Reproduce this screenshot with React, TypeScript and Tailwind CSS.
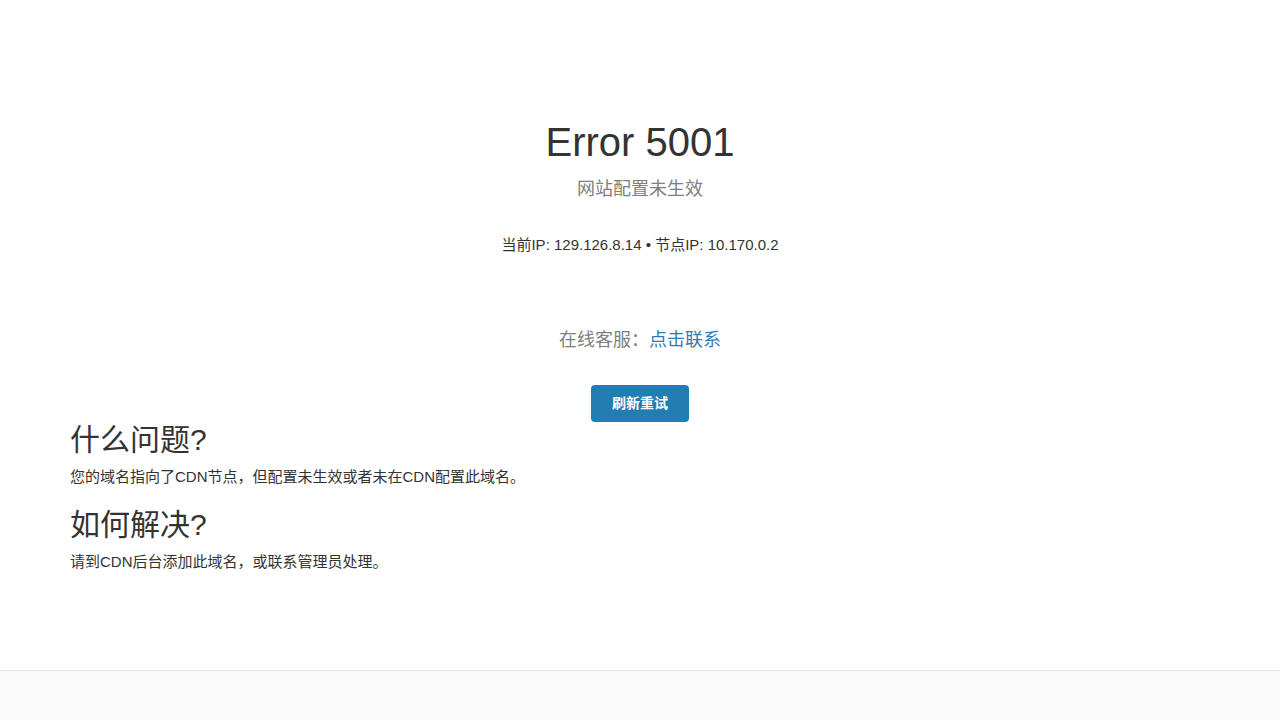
export default function App() {
  return (
    <div
      className="min-h-screen flex flex-col bg-white text-[#333]"
      style={{ fontFamily: '"Liberation Sans", "Noto Sans CJK SC", sans-serif' }}
    >
      <main className="flex-1 w-[1170px] mx-auto px-[15px]">
        <div className="text-center pt-[118px]">
          <h1 className="text-[40px] leading-[48px] font-normal">Error 5001</h1>
          <p className="mt-[11px] text-[18px] leading-[24px] text-[#808080]">网站配置未生效</p>
          <p className="mt-[34px] text-[15px] leading-[20px]">
            当前IP: 129.126.8.14 • 节点IP: 10.170.0.2
          </p>
          <p className="mt-[73px] text-[18px] leading-[24px] text-[#808080]">
            在线客服：
            <a href="#" className="text-[#337ab7]">
              点击联系
            </a>
          </p>
          <button className="mt-[33px] w-[98px] h-[37px] rounded bg-[#217db2] text-white text-[14px] font-bold">
            刷新重试
          </button>
        </div>
        <h2 className="text-[30px] leading-[36px]">什么问题?</h2>
        <p className="mt-[9px] text-[15px] leading-[20px]">
          您的域名指向了CDN节点，但配置未生效或者未在CDN配置此域名。
        </p>
        <h2 className="mt-[20px] text-[30px] leading-[36px]">如何解决?</h2>
        <p className="mt-[9px] text-[15px] leading-[20px]">请到CDN后台添加此域名，或联系管理员处理。</p>
      </main>
      <footer className="h-[50px] border-t border-[#e5e5e5] bg-[#fafafa]" />
    </div>
  );
}
